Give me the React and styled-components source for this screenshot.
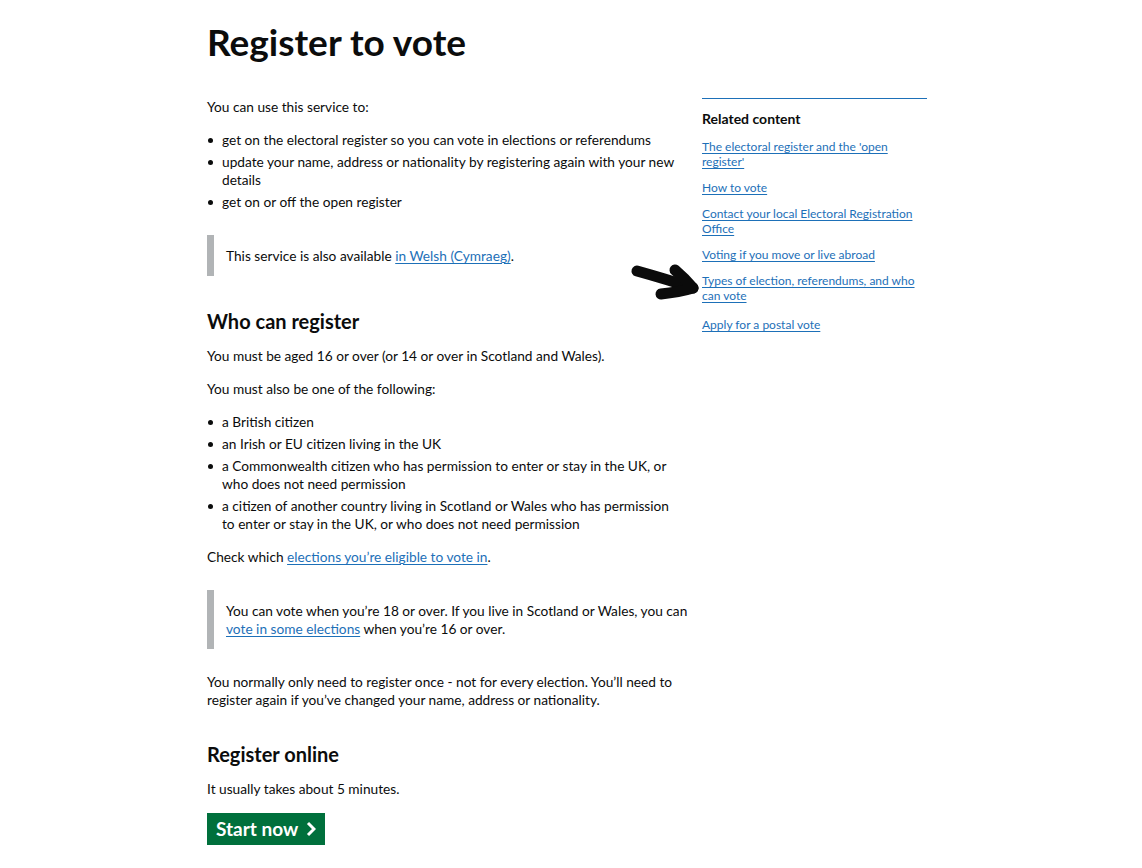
import React from "react";
import styled, { createGlobalStyle } from "styled-components";

const Global = createGlobalStyle`
  body {
    margin: 0;
    background: #ffffff;
    color: #0b0c0c;
    font-family: Lato, "Liberation Sans", Arial, sans-serif;
  }
`;

const Page = styled.div`
  position: relative;
  width: 720px;
  margin: 0 0 0 207px;
  padding-top: 18px;
`;

const Title = styled.h1`
  margin: 0 0 32px;
  font-size: 37px;
  line-height: 48px;
  font-weight: 700;
`;

const Columns = styled.div`
  display: grid;
  grid-template-columns: 490px 225px;
  column-gap: 5px;
  align-items: start;
`;

const Main = styled.div`
  font-size: 13.7px;
  line-height: 18px;
`;

const Para = styled.p`
  margin: 0 0 15px;
  max-width: 475px;
`;

const List = styled.ul`
  list-style: none;
  margin: 0 0 15px;
  padding-left: 15px;
  max-width: 460px;
  li {
    position: relative;
    margin-bottom: 4px;
  }
  li::before {
    content: "";
    position: absolute;
    left: -14px;
    top: 7px;
    width: 5px;
    height: 5px;
    border-radius: 50%;
    background: #0b0c0c;
  }
`;

const Inset = styled.div`
  margin: 24px 0;
  padding: 12px 0 11px 12px;
  border-left: 7px solid #b1b4b6;
  p {
    margin: 0;
  }
`;

const Link = styled.a`
  color: #1d70b8;
  text-decoration: underline;
  text-underline-offset: 2px;
  text-decoration-thickness: 1px;
`;

const Heading = styled.h2`
  margin: 33px 0 14px;
  font-size: 20px;
  line-height: 24px;
  font-weight: 700;
`;

const StartButton = styled.a`
  display: inline-flex;
  align-items: center;
  gap: 8px;
  padding: 5px 9px;
  background: #00703c;
  box-shadow: 0 2px 0 #002d18;
  color: #ffffff;
  font-size: 19px;
  line-height: 22px;
  font-weight: 700;
  text-decoration: none;
`;

const Sidebar = styled.aside`
  border-top: 1px solid #1d70b8;
  padding-top: 11px;
`;

const SideTitle = styled.h2`
  margin: 0 0 11px;
  font-size: 14px;
  line-height: 18px;
  font-weight: 700;
`;

const SideList = styled.ul`
  list-style: none;
  margin: 0;
  padding: 0;
  font-size: 12px;
  line-height: 15px;
  li {
    margin-bottom: 11px;
  }
  li:last-child {
    margin-top: 14px;
  }
`;

const Arrow = styled.svg`
  position: absolute;
  left: 418px;
  top: 258px;
  width: 80px;
  height: 46px;
`;

const related = [
  "The electoral register and the 'open register'",
  "How to vote",
  "Contact your local Electoral Registration Office",
  "Voting if you move or live abroad",
  "Types of election, referendums, and who can vote",
  "Apply for a postal vote",
];

export default function App() {
  return (
    <>
      <Global />
      <Page>
        <Title>Register to vote</Title>
        <Columns>
          <Main>
            <Para>You can use this service to:</Para>
            <List>
              <li>get on the electoral register so you can vote in elections or referendums</li>
              <li>update your name, address or nationality by registering again with your new details</li>
              <li>get on or off the open register</li>
            </List>
            <Inset>
              <p>
                This service is also available <Link href="#">in Welsh (Cymraeg)</Link>.
              </p>
            </Inset>
            <Heading>Who can register</Heading>
            <Para>You must be aged 16 or over (or 14 or over in Scotland and Wales).</Para>
            <Para>You must also be one of the following:</Para>
            <List>
              <li>a British citizen</li>
              <li>an Irish or EU citizen living in the UK</li>
              <li>a Commonwealth citizen who has permission to enter or stay in the UK, or who does not need permission</li>
              <li>a citizen of another country living in Scotland or Wales who has permission to enter or stay in the UK, or who does not need permission</li>
            </List>
            <Para>
              Check which <Link href="#">elections you’re eligible to vote in</Link>.
            </Para>
            <Inset>
              <p>
                You can vote when you’re 18 or over. If you live in Scotland or Wales, you can{" "}
                <Link href="#">vote in some elections</Link> when you’re 16 or over.
              </p>
            </Inset>
            <Para>
              You normally only need to register once - not for every election. You’ll need to
              register again if you’ve changed your name, address or nationality.
            </Para>
            <Heading>Register online</Heading>
            <Para>It usually takes about 5 minutes.</Para>
            <StartButton href="#">
              Start now
              <svg width="10" height="16" viewBox="0 0 10 16" aria-hidden="true">
                <path d="M2 2 L8 8 L2 14" fill="none" stroke="#fff" strokeWidth="3" />
              </svg>
            </StartButton>
          </Main>
          <Sidebar>
            <SideTitle>Related content</SideTitle>
            <SideList>
              {related.map((r) => (
                <li key={r}>
                  <Link href="#">{r}</Link>
                </li>
              ))}
            </SideList>
          </Sidebar>
        </Columns>
        <Arrow viewBox="0 0 80 46" aria-hidden="true">
          <g fill="none" stroke="#0b0b0b" strokeWidth="11" strokeLinecap="round" strokeLinejoin="round">
            <path d="M12 13 C 30 18, 50 24, 68 30" />
            <path d="M50 12 C 57 18, 63 24, 68 30 C 58 33, 46 35, 36 36" />
          </g>
        </Arrow>
      </Page>
    </>
  );
}
